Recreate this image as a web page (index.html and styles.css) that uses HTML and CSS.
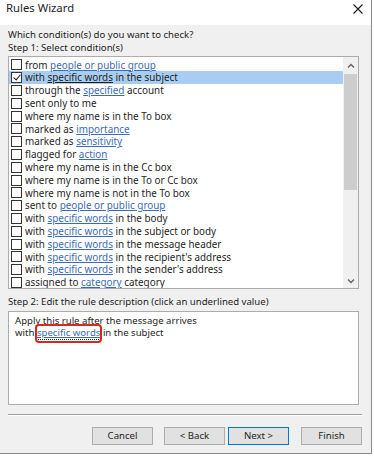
FILE: index.html
```html
<!DOCTYPE html>
<html lang="en">
<head>
    <meta charset="UTF-8">
    <title>Rules Wizard</title>
    <link rel="stylesheet" href="styles.css">
</head>
<body>
    <div class="window">
        <!-- Title bar -->
        <div class="titlebar">
            <span class="title">Rules Wizard</span>
            <svg class="close" width="12" height="12" viewBox="0 0 12 12">
                <path d="M1.5 1.5 L10.5 10.5 M10.5 1.5 L1.5 10.5" stroke="#1a1a1a" stroke-width="1.1" fill="none"/>
            </svg>
        </div>

        <div class="dialog">
            <p class="prompt">Which condition(s) do you want to check?</p>
            <p class="step">Step 1: Select condition(s)</p>

            <!-- Step 1 list -->
            <div class="listbox">
                <ul class="conditions">
                    <li class="row"><span class="box"></span>from <a>people or public group</a></li>
                    <li class="row selected"><span class="box checked"></span>with <a>specific words</a> in the subject</li>
                    <li class="row"><span class="box"></span>through the <a>specified</a> account</li>
                    <li class="row"><span class="box"></span>sent only to me</li>
                    <li class="row"><span class="box"></span>where my name is in the To box</li>
                    <li class="row"><span class="box"></span>marked as <a>importance</a></li>
                    <li class="row"><span class="box"></span>marked as <a>sensitivity</a></li>
                    <li class="row"><span class="box"></span>flagged for <a>action</a></li>
                    <li class="row"><span class="box"></span>where my name is in the Cc box</li>
                    <li class="row"><span class="box"></span>where my name is in the To or Cc box</li>
                    <li class="row"><span class="box"></span>where my name is not in the To box</li>
                    <li class="row"><span class="box"></span>sent to <a>people or public group</a></li>
                    <li class="row"><span class="box"></span>with <a>specific words</a> in the body</li>
                    <li class="row"><span class="box"></span>with <a>specific words</a> in the subject or body</li>
                    <li class="row"><span class="box"></span>with <a>specific words</a> in the message header</li>
                    <li class="row"><span class="box"></span>with <a>specific words</a> in the recipient's address</li>
                    <li class="row"><span class="box"></span>with <a>specific words</a> in the sender's address</li>
                    <li class="row"><span class="box"></span>assigned to <a>category</a> category</li>
                </ul>
                <div class="scrollbar">
                    <svg class="arrow" width="14" height="14" viewBox="0 0 14 14">
                        <path d="M4 8.5 L7 5.5 L10 8.5" stroke="#606060" stroke-width="1.3" fill="none"/>
                    </svg>
                    <div class="track"><div class="thumb"></div></div>
                    <svg class="arrow" width="14" height="14" viewBox="0 0 14 14">
                        <path d="M4 5.5 L7 8.5 L10 5.5" stroke="#606060" stroke-width="1.3" fill="none"/>
                    </svg>
                </div>
            </div>

            <p class="step step-two">Step 2: Edit the rule description (click an underlined value)</p>

            <!-- Step 2 description -->
            <div class="description">
                <p>Apply this rule after the message arrives</p>
                <p>with <a class="focused">specific words</a> in the subject</p>
            </div>

            <div class="separator"></div>

            <div class="buttons">
                <button class="btn">Cancel</button>
                <button class="btn back">&lt; Back</button>
                <button class="btn default">Next &gt;</button>
                <button class="btn finish">Finish</button>
            </div>
        </div>
    </div>
</body>
</html>
```

FILE: styles.css
```css
* {
    margin: 0;
    padding: 0;
    box-sizing: border-box;
}

body {
    font-family: "Noto Sans", "Open Sans", sans-serif;
    font-size: 9.6px;
    color: #1e1e1e;
    background: #ffffff;
}

.window {
    width: 372px;
    height: 454px;
    background: #f0f0f0;
    border-right: 1px solid #8a8a8a;
    border-bottom: 1px solid #8a8a8a;
}

.titlebar {
    height: 25px;
    background: #ffffff;
    display: flex;
    justify-content: space-between;
    align-items: flex-start;
    padding: 1px 7px 0 6px;
}

.title {
    font-size: 11.3px;
    line-height: 14px;
}

.close {
    margin-top: 2px;
}

.dialog {
    padding: 4px 0 0 8px;
}

.prompt,
.step {
    line-height: 12.5px;
}

.listbox {
    width: 351px;
    height: 233px;
    margin-top: 2px;
    background: #ffffff;
    border: 1px solid #acacac;
    display: flex;
    overflow: hidden;
}

.conditions {
    list-style: none;
    flex: 1;
    padding-top: 1.6px;
}

.row {
    height: 12.8px;
    line-height: 12.8px;
    display: flex;
    align-items: center;
    padding-left: 2px;
    white-space: pre;
    font-size: 9.9px;
}

.row.selected {
    background: #a9cdf0;
}

.row a {
    color: #3b6bb3;
    text-decoration: underline;
}

.row.selected a {
    color: #1e1e1e;
}

.box {
    width: 11px;
    height: 11px;
    border: 1px solid #333333;
    background: #ffffff;
    margin-right: 3px;
    flex-shrink: 0;
    position: relative;
}

.box.checked::after {
    content: "";
    position: absolute;
    left: 3px;
    top: 0px;
    width: 3px;
    height: 6px;
    border-right: 1.8px solid #111;
    border-bottom: 1.8px solid #111;
    transform: rotate(40deg);
}

.scrollbar {
    width: 15px;
    background: #f0f0f0;
    display: flex;
    flex-direction: column;
    align-items: center;
    padding-top: 2px;
}

.track {
    flex: 1;
    width: 100%;
    padding: 1px 1px;
}

.thumb {
    height: 116px;
    background: #cdcdcd;
}

.step-two {
    margin-top: 7px;
}

.description {
    width: 351px;
    height: 94px;
    margin-top: 2px;
    background: #ffffff;
    border: 1px solid #acacac;
    padding: 3px 6px;
    line-height: 12px;
}

.description a {
    color: #3b6bb3;
    text-decoration: underline;
}

.focused {
    position: relative;
    outline: 1px dotted #222;
    outline-offset: 0;
}

/* red annotation box drawn round the focused value */
.focused::after {
    content: "";
    position: absolute;
    left: -2px;
    right: -2px;
    top: -2px;
    bottom: -4px;
    border: 2px solid #d8291f;
    border-radius: 4px;
}

.separator {
    width: 354px;
    height: 1px;
    margin-top: 9px;
    background: #a0a0a0;
    border-bottom: 1px solid #ffffff;
    box-sizing: content-box;
}

.buttons {
    display: flex;
    justify-content: flex-end;
    margin-top: 11px;
    padding-right: 9px;
}

.btn {
    width: 61px;
    height: 18px;
    font-family: inherit;
    font-size: 9.6px;
    color: #1e1e1e;
    background: #e1e1e1;
    border: 1px solid #adadad;
}

.btn.back {
    margin-left: 11px;
}

.btn.default {
    border-color: #0078d7;
    margin-left: 3px;
}

.btn.finish {
    margin-left: 12px;
}
```
